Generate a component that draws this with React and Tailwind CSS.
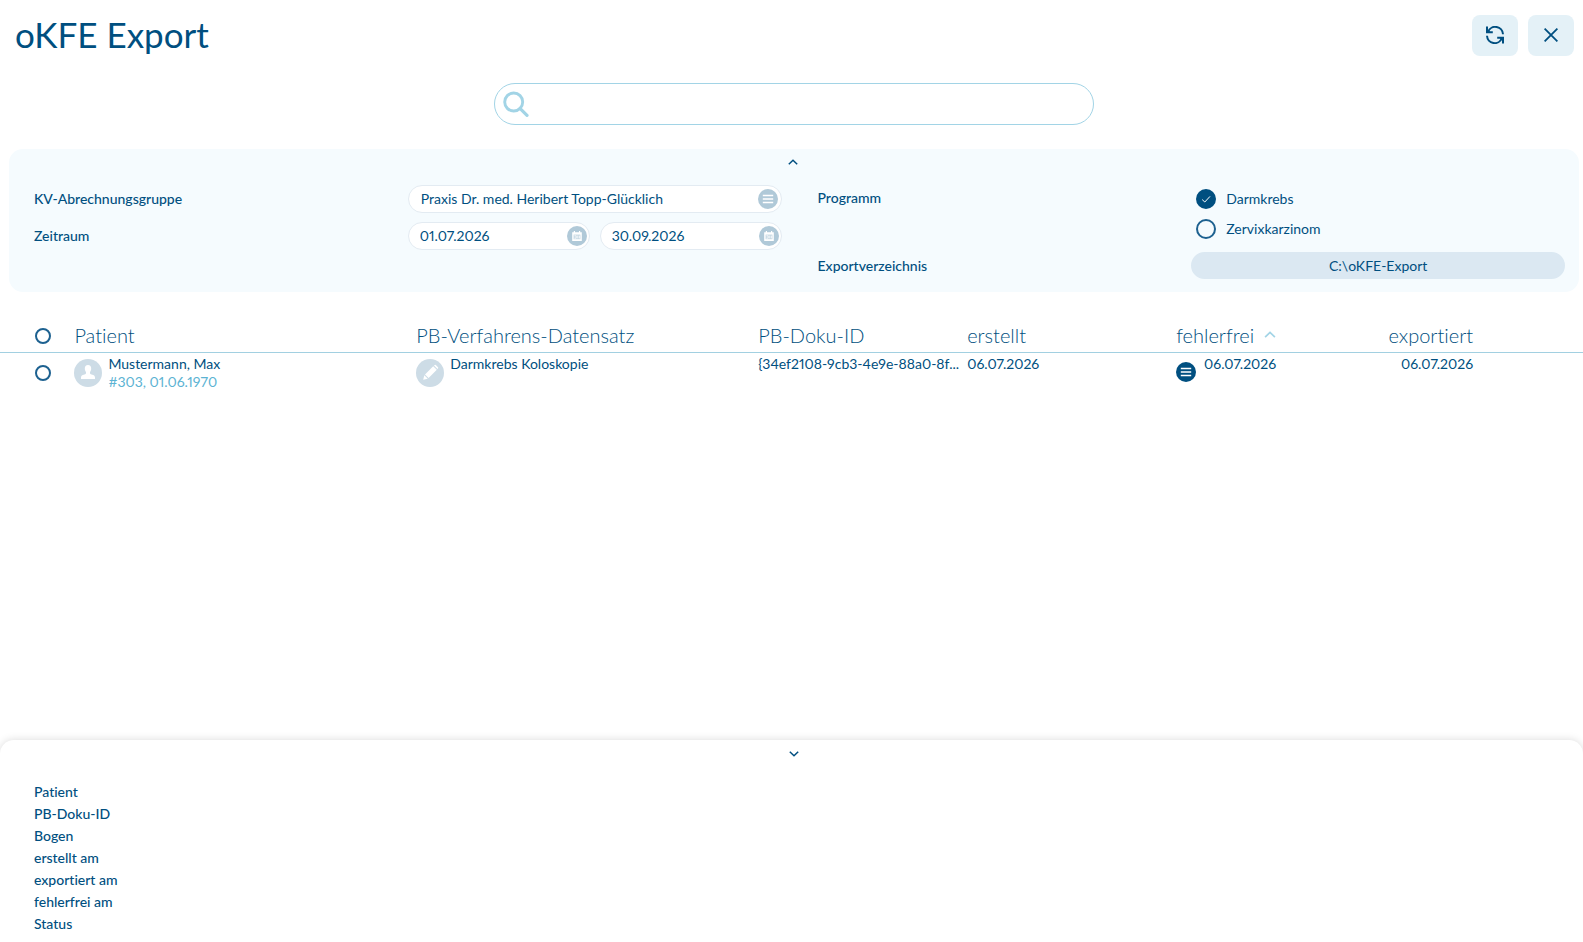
import React, { useState } from "react";

const rows = [
  {
    id: 1,
    name: "Mustermann, Max",
    info: "#303, 01.06.1970",
    dataset: "Darmkrebs Koloskopie",
    docId: "{34ef2108-9cb3-4e9e-88a0-8f...",
    created: "06.07.2026",
    valid: "06.07.2026",
    exported: "06.07.2026",
  },
];

const details = [
  "Patient",
  "PB-Doku-ID",
  "Bogen",
  "erstellt am",
  "exportiert am",
  "fehlerfrei am",
  "Status",
];

function Chevron({ className }) {
  return (
    <svg viewBox="0 0 10 6" className={className} fill="none" stroke="currentColor" strokeWidth="1.5">
      <path d="M0.8 5.2 L5 1.2 L9.2 5.2" />
    </svg>
  );
}

function RefreshIcon() {
  return (
    <svg viewBox="0 0 18 18" className="h-[18px] w-[18px]" fill="none" stroke="currentColor" strokeWidth="2">
      <path d="M2.2 5.6 A7.7 7.7 0 0 1 17 8.2" />
      <path d="M15.8 12.4 A7.7 7.7 0 0 1 1 9.8" />
      <path d="M1 0.5 V6.2 H6.8" />
      <path d="M17 17.5 V11.8 H11.2" />
      <path d="M0.5 7 V2 L5.2 7 Z M17.5 11 V16 L12.8 11 Z" fill="currentColor" stroke="none" />
    </svg>
  );
}

function SearchIcon() {
  return (
    <svg viewBox="0 0 26 26" className="h-[26px] w-[26px] shrink-0" fill="none" stroke="currentColor">
      <circle cx="10.7" cy="11" r="9" strokeWidth="2.9" />
      <path d="M17.2 17.6 L24 24.4" strokeWidth="3.2" strokeLinecap="round" />
    </svg>
  );
}

function ListIcon() {
  return (
    <svg viewBox="0 0 20 20" className="h-5 w-5" stroke="#fff" strokeWidth="1.3">
      <circle cx="10" cy="10" r="10" fill="currentColor" stroke="none" />
      <path d="M4.8 6.5 H15.2 M4.8 10 H15.2 M4.8 13.5 H15.2" />
    </svg>
  );
}

function CalendarIcon() {
  return (
    <svg viewBox="0 0 20 20" className="h-5 w-5">
      <circle cx="10" cy="10" r="10" fill="currentColor" />
      <path
        d="M5.2 6.2 H6.8 V5 H8 V6.2 H12 V5 H13.2 V6.2 H14.8 V15 H5.2 Z"
        fill="#fff"
      />
      <path d="M6.6 8.6 H13.4 V13.2 H6.6 Z" fill="currentColor" opacity="0.75" />
      <path d="M7.4 9.8 H9.2 V12.2 H7.4 M10.8 9.6 V12.4 M12.4 9.6 V12.4" stroke="#fff" strokeWidth="0.8" fill="none" />
    </svg>
  );
}

function PersonIcon() {
  return (
    <svg viewBox="0 0 28 28" className="h-7 w-7 shrink-0">
      <circle cx="14" cy="14" r="14" fill="#cddce6" />
      <path
        d="M14 6 C16.2 6 17.3 7.6 17.2 9.7 C17.1 11.4 16.4 12.4 16 13.2 C15.8 14.6 16.3 15 17.6 15.4 C20 16 21 16.7 21 18.6 V20 H7 V18.6 C7 16.7 8 16 10.4 15.4 C11.7 15 12.2 14.6 12 13.2 C11.6 12.4 10.9 11.4 10.8 9.7 C10.7 7.6 11.8 6 14 6 Z"
        fill="#fff"
      />
    </svg>
  );
}

function PencilIcon() {
  return (
    <svg viewBox="0 0 28 28" className="h-7 w-7 shrink-0">
      <circle cx="14" cy="14" r="14" fill="#cddce6" />
      <path d="M7.2 20.8 L8.3 16.2 L11.8 19.7 Z M9 15.4 L17.2 7.2 L20.8 10.8 L12.6 19 Z" fill="#fff" />
      <path d="M18 6.4 L18.6 5.9 Q19.2 5.5 19.8 6 L22 8.2 Q22.5 8.8 22 9.4 L21.5 10 Z" fill="#fff" />
    </svg>
  );
}

function CheckOption({ label, checked, onChange }) {
  return (
    <label className="flex items-center gap-[10px]">
      <span className="grid h-5 w-5">
        <input
          type="checkbox"
          checked={checked}
          onChange={onChange}
          className="col-start-1 row-start-1 h-5 w-5 appearance-none rounded-full border-2 border-[#1d6190] checked:border-[#004f80] checked:bg-[#004f80]"
        />
        {checked && (
          <svg
            viewBox="0 0 20 20"
            className="pointer-events-none col-start-1 row-start-1 h-5 w-5"
            fill="none"
            stroke="#fff"
            strokeWidth="1"
          >
            <path d="M6.2 10.6 L8.8 13 L14 7.4" />
          </svg>
        )}
      </span>
      {label}
    </label>
  );
}

function DateField({ label, value, onChange }) {
  return (
    <div className="flex h-7 min-w-0 flex-1 items-center rounded-full border border-[#e3ebf2] bg-white pr-[2px] pl-[11px]">
      <input
        type="text"
        aria-label={label}
        value={value}
        onChange={(e) => onChange(e.target.value)}
        className="min-w-0 flex-1 proportional-nums outline-none"
      />
      <button type="button" aria-label="Kalender" className="text-[#b0c9d8]">
        <CalendarIcon />
      </button>
    </div>
  );
}

function RowCheck({ label, checked, onChange }) {
  return (
    <input
      type="checkbox"
      aria-label={label}
      checked={checked}
      onChange={onChange}
      className="block h-4 w-4 appearance-none rounded-full border-2 border-[#1d6190] checked:bg-[#004f80]"
    />
  );
}

function App() {
  const [search, setSearch] = useState("");
  const [group, setGroup] = useState("Praxis Dr. med. Heribert Topp-Glücklich");
  const [from, setFrom] = useState("01.07.2026");
  const [to, setTo] = useState("30.09.2026");
  const [colon, setColon] = useState(true);
  const [cervix, setCervix] = useState(false);
  const [selected, setSelected] = useState(false);

  const toggleSelected = () => setSelected(!selected);

  return (
    <div className="flex min-h-screen flex-col bg-white font-['Lato',sans-serif] text-[14px] leading-[18px] text-[#004f80] [font-variant-ligatures:none]">
      <header className="flex items-start justify-between pt-[15px] pr-[9px] pl-[15px]">
        <h1 className="text-[35px] leading-[38px]">oKFE Export</h1>
        <div className="flex gap-[10px]">
          <button
            type="button"
            aria-label="Aktualisieren"
            className="flex h-[41px] w-[46px] items-center justify-center rounded-lg bg-[#e4f1f7] pb-px"
          >
            <RefreshIcon />
          </button>
          <button
            type="button"
            aria-label="Schließen"
            className="flex h-[41px] w-[46px] items-center justify-center rounded-lg bg-[#e4f1f7] pb-px"
          >
            <svg viewBox="0 0 14 14" className="h-[14px] w-[14px]" stroke="currentColor" strokeWidth="1.8">
              <path d="M0.6 0.6 L13.4 13.4 M13.4 0.6 L0.6 13.4" />
            </svg>
          </button>
        </div>
      </header>

      <div className="mt-[27px] flex justify-center pl-[5px]">
        <div className="flex h-[42px] w-full max-w-[600px] items-center gap-2 rounded-full border border-[#a2d4e6] px-2 text-[#a2d4e6]">
          <SearchIcon />
          <input
            type="search"
            aria-label="Suche"
            value={search}
            onChange={(e) => setSearch(e.target.value)}
            className="min-w-0 flex-1 text-[#004f80] outline-none"
          />
        </div>
      </div>

      {/* Filter */}
      <section className="mt-6 mr-1 ml-[9px] rounded-[14px] bg-[#f5fbfe] pr-[14px] pb-[13px] pl-[25px]">
        <div className="flex h-9 justify-center pt-[10px] pr-[13px]">
          <button type="button" aria-label="Filter einklappen" className="h-[6px]">
            <Chevron className="h-[6px] w-[10px]" />
          </button>
        </div>
        <div className="grid grid-cols-2 gap-9">
          <div className="flex flex-col gap-[9px]">
            <div className="grid grid-cols-2 items-center">
              <label htmlFor="group" className="font-medium">
                KV-Abrechnungsgruppe
              </label>
              <div className="flex h-7 items-center rounded-full border border-[#e3ebf2] bg-white pr-[3px] pl-3">
                <input
                  id="group"
                  type="text"
                  value={group}
                  onChange={(e) => setGroup(e.target.value)}
                  className="min-w-0 flex-1 outline-none"
                />
                <button type="button" aria-label="Gruppe auswählen" className="text-[#b0c9d8]">
                  <ListIcon />
                </button>
              </div>
            </div>
            <div className="grid grid-cols-2 items-center">
              <span className="font-medium">Zeitraum</span>
              <div className="flex gap-[10px]">
                <DateField label="Zeitraum von" value={from} onChange={setFrom} />
                <DateField label="Zeitraum bis" value={to} onChange={setTo} />
              </div>
            </div>
          </div>
          <div className="flex flex-col gap-[13px]">
            <div className="grid grid-cols-2 pt-1">
              <span className="font-medium">Programm</span>
              <div className="flex flex-col gap-[10px] pl-[5px]">
                <CheckOption label="Darmkrebs" checked={colon} onChange={() => setColon(!colon)} />
                <CheckOption label="Zervixkarzinom" checked={cervix} onChange={() => setCervix(!cervix)} />
              </div>
            </div>
            <div className="grid grid-cols-2 items-center">
              <span className="font-medium">Exportverzeichnis</span>
              <button type="button" className="h-[27px] rounded-full bg-[#dbe8f2]">
                C:\oKFE-Export
              </button>
            </div>
          </div>
        </div>
      </section>

      {/* Table */}
      <main className="flex-1 pt-7">
        <table className="w-full table-fixed text-left proportional-nums">
          <thead className="border-b border-[#a2d0e1] text-[20px] leading-6">
            <tr className="h-8">
              <th className="w-[4.7%] pl-[35px]">
                <RowCheck label="Alle auswählen" checked={selected} onChange={toggleSelected} />
              </th>
              <th className="w-[21.6%] pb-[2px] font-light">Patient</th>
              <th className="w-[21.6%] pb-[2px] font-light">PB-Verfahrens-Datensatz</th>
              <th className="w-[13.2%] pb-[2px] font-light">PB-Doku-ID</th>
              <th className="w-[13.2%] pb-[2px] font-light">erstellt</th>
              <th className="w-[13.2%] pb-[2px] font-light">
                <div className="flex w-[100px] items-center justify-between">
                  fehlerfrei
                  <Chevron className="h-[7px] w-3 text-[#a2d4e6]" />
                </div>
              </th>
              <th className="pb-[2px] font-light">
                <div className="w-[88px] text-right">exportiert</div>
              </th>
            </tr>
          </thead>
          <tbody>
            {rows.map((row) => (
              <tr key={row.id} className="h-[41px] align-top">
                <td className="pt-3 pl-[35px]">
                  <RowCheck label={row.name} checked={selected} onChange={toggleSelected} />
                </td>
                <td className="pt-[2px]">
                  <div className="flex gap-[6px]">
                    <div className="pt-1">
                      <PersonIcon />
                    </div>
                    <div>
                      <div>{row.name}</div>
                      <div className="text-[#5cb3d3]">{row.info}</div>
                    </div>
                  </div>
                </td>
                <td className="pt-[2px]">
                  <div className="flex gap-[6px]">
                    <div className="pt-1">
                      <PencilIcon />
                    </div>
                    {row.dataset}
                  </div>
                </td>
                <td className="pt-[2px] whitespace-nowrap">{row.docId}</td>
                <td className="pt-[2px]">{row.created}</td>
                <td className="pt-[2px]">
                  <div className="flex w-[100px] justify-between">
                    <button type="button" aria-label="Details" className="pt-[7px]">
                      <ListIcon />
                    </button>
                    {row.valid}
                  </div>
                </td>
                <td className="pt-[2px]">
                  <div className="w-[88px] text-right">{row.exported}</div>
                </td>
              </tr>
            ))}
          </tbody>
        </table>
      </main>

      {/* Details */}
      <section className="rounded-t-[14px] bg-white pb-[7px] shadow-[0_0_8px_rgba(0,0,0,0.15)]">
        <div className="flex h-[41px] justify-center pt-[11px] pl-1">
          <button type="button" aria-label="Details einklappen" className="h-[6px]">
            <Chevron className="h-[6px] w-[10px] rotate-180" />
          </button>
        </div>
        <ul className="pl-[34px] leading-[22px] font-medium">
          {details.map((d) => (
            <li key={d}>{d}</li>
          ))}
        </ul>
      </section>
    </div>
  );
}

export default App;
